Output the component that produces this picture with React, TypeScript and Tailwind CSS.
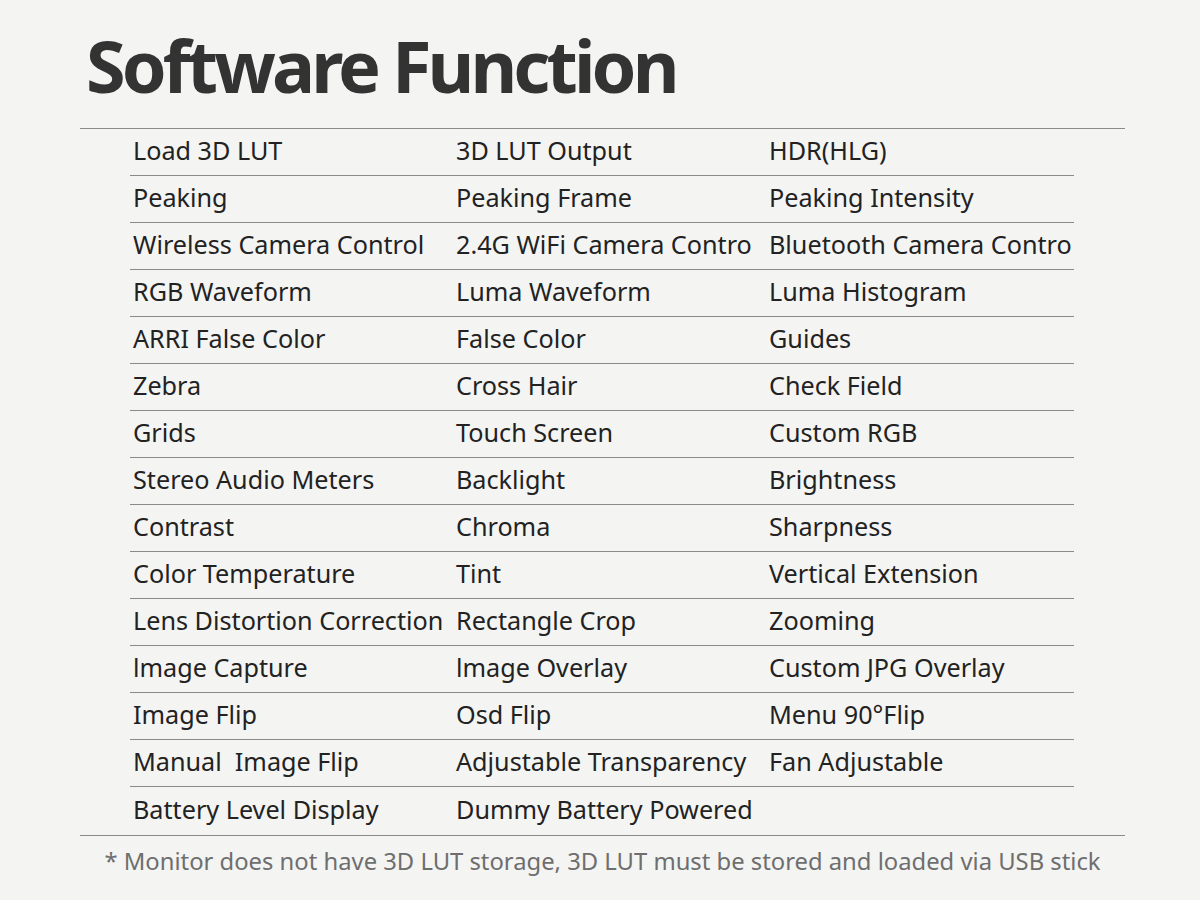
const rows: [string, string, string][] = [
  ['Load 3D LUT', '3D LUT Output', 'HDR(HLG)'],
  ['Peaking', 'Peaking Frame', 'Peaking Intensity'],
  ['Wireless Camera Control', '2.4G WiFi Camera Contro', 'Bluetooth Camera Contro'],
  ['RGB Waveform', 'Luma Waveform', 'Luma Histogram'],
  ['ARRI False Color', 'False Color', 'Guides'],
  ['Zebra', 'Cross Hair', 'Check Field'],
  ['Grids', 'Touch Screen', 'Custom RGB'],
  ['Stereo Audio Meters', 'Backlight', 'Brightness'],
  ['Contrast', 'Chroma', 'Sharpness'],
  ['Color Temperature', 'Tint', 'Vertical Extension'],
  ['Lens Distortion Correction', 'Rectangle Crop', 'Zooming'],
  ['lmage Capture', 'lmage Overlay', 'Custom JPG Overlay'],
  ['Image Flip', 'Osd Flip', 'Menu 90°Flip'],
  ['Manual  Image Flip', 'Adjustable Transparency', 'Fan Adjustable'],
  ['Battery Level Display', 'Dummy Battery Powered', ''],
];

export default function App() {
  return (
    <div className="w-[1200px] h-[900px] overflow-hidden bg-[#f4f4f3] font-['Noto_Sans',sans-serif]">
      <div className="pl-[80px] pr-[75px]">
        <h1 className="pl-[6px] pt-[22px] h-[128px] text-[72px] leading-[1.2] font-bold tracking-[-3.9px] text-[#333333]">
          Software Function
        </h1>

        <div className="border-y border-[#8a8a8a]">
          <div className="ml-[50px] w-[944px]">
            {rows.map((r, i) => (
              <div
                key={i}
                className={
                  i < rows.length - 1
                    ? 'grid grid-cols-[323px_313px_308px] h-[47px] items-center pb-[3px] border-b border-[#8a8a8a]'
                    : 'grid grid-cols-[323px_313px_308px] h-[48px] items-center pb-[3px]'
                }
              >
                {r.map((c, j) => (
                  <div key={j} className="pl-[3px] text-[25.2px] text-[#222222] whitespace-pre">
                    {c}
                  </div>
                ))}
              </div>
            ))}
          </div>
        </div>

        <p className="mt-[8px] text-center text-[23.8px] text-[#6e6e6e]">
          * Monitor does not have 3D LUT storage, 3D LUT must be stored and loaded via USB stick
        </p>
      </div>
    </div>
  );
}
